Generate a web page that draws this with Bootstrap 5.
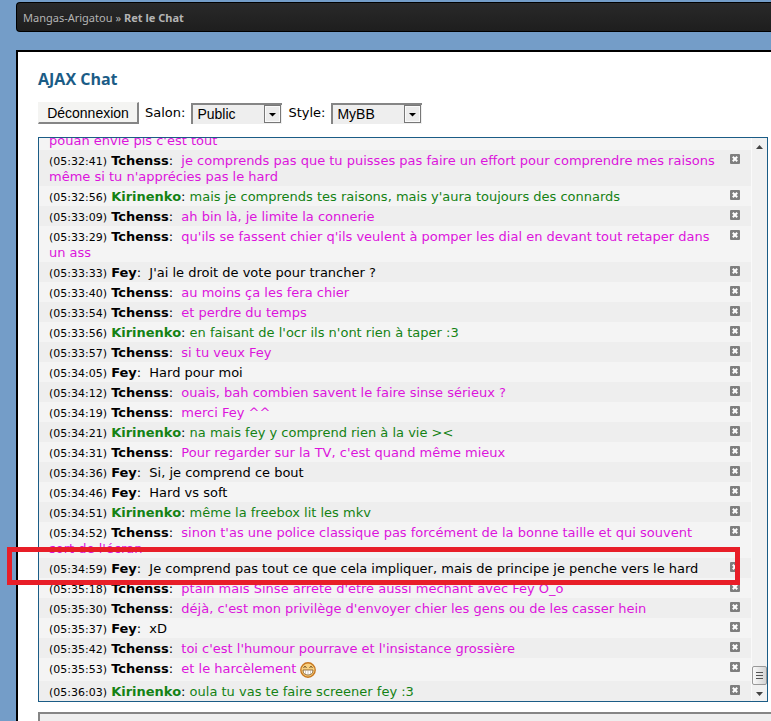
<!DOCTYPE html>
<html lang="fr">
<head>
<meta charset="utf-8">
<meta name="viewport" content="width=device-width, initial-scale=1">
<title>Ret le Chat</title>
<link href="https://cdn.jsdelivr.net/npm/bootstrap@5.3.0/dist/css/bootstrap.min.css" rel="stylesheet">
<style>
body { background: #749dc8; color: #000; font: 13px/16px "DejaVu Sans", Verdana, sans-serif; }
.page { padding: 2px 0 0 16px; }
.crumbs { background: linear-gradient(#292929, #1e1e1e); border: 1px solid #000; border-right: 0; border-radius: 4px 0 0 4px; height: 30px; margin-bottom: 18px; gap: 3px; color: #b4b4b4; font: 11px/16px "Noto Sans", sans-serif; padding: 2px 6px 0; }
.crumbs a { color: inherit; }
.panel { border: 2px solid #000; border-right: 0; border-bottom: 0; padding: 15px 3px 0 20px; }
.panel-title { color: #1b5c86; font: bold 16px/24px "Open Sans", "Trebuchet MS", sans-serif; margin: 0 0 11px; }
.toolbar { gap: 6px; height: 22px; margin-bottom: 13px; }
.logout { background: #f4f4f2; border: 1px solid #f4f4f2; border-right: 2px solid #858585; border-bottom: 2px solid #858585; width: 101px; height: 22px; padding: 0; font: 14px/16px "Liberation Sans", Arial, sans-serif; color: #000; }
.picker { appearance: none; border: 0; border-top: 2px solid #858585; border-left: 2px solid #858585; border-radius: 0; width: 91px; height: 21px; padding: 0 20px 1px 4px; font: 14px/16px "Liberation Sans", Arial, sans-serif; color: #000;
  background: #eee url("data:image/svg+xml,%3Csvg xmlns='http://www.w3.org/2000/svg' width='17' height='18'%3E%3Crect x='.5' y='.5' width='16' height='17' fill='%23ececec' stroke='%23777'/%3E%3Crect x='1.5' y='1.5' width='14' height='15' fill='none' stroke='%23fafafa'/%3E%3Cpath d='M5 8h7L8.500 11.500z'/%3E%3C/svg%3E") no-repeat right 1px top 0; }
.chat-box { border: 1px solid #1b5c86; height: calc(100vh - 156px); min-height: 200px; background: #f4f4f4; }
.messages { overflow: hidden; }
.msg { padding: 3px 11px 1px 10px; background: #f4f4f4; flex: none; }
.msg:nth-child(even) { background: #eee; }
.msg p { margin: 0; padding-right: 12px; }
.msg time { font-size: 11px; line-height: 1; }
.said { margin-left: 4px; }
.said.green { margin-left: 0; }
.pink { color: #dc14dc; }
.green { color: #148214; }
.remove { border: 0; padding: 0; background: none; width: 10px; height: 10px; margin-top: 1px; line-height: 0; flex: none; }
.smiley { height: 19px; padding: 1px 0 2px; vertical-align: -7px; }
.scroll-track { width: 16px; background: #f1f1f1; border-left: 1px solid #fafafa; padding: 7px 0 5px; }
.thumb { width: 15px; height: 19px; border: 1px solid #999; border-radius: 2px; background: linear-gradient(90deg, #fafafa, #d4d4d4); margin-bottom: 7px; }
.highlight { left: -31px; right: 28px; bottom: 117px; height: 38px; border: 5px solid #e81e28; pointer-events: none; }
.entry { border: 0 solid #858585; border-width: 2px 0 0 2px; border-radius: 0; background: #eee; height: 60px; margin: 10px -3px 0 0; resize: none; width: calc(100% + 3px); }
</style>
</head>
<body class="vh-100 overflow-hidden">
<svg class="d-none" aria-hidden="true">
  <symbol id="x" viewBox="0 0 10 10"><rect width="10" height="10" rx="1" fill="#7e7e7e"/><path d="M3.500 3.500l3 3M6.500 3.500l-3 3" stroke="#fff" stroke-width="2" stroke-linecap="square"/></symbol>
</svg>
<div class="page d-flex flex-column">
  <nav class="crumbs d-flex align-items-center" aria-label="Fil d'Ariane">
    <a href="#" class="text-decoration-none">Mangas-Arigatou</a><span>»</span><b>Ret le Chat</b>
  </nav>
  <main class="panel bg-white">
    <h1 class="panel-title">AJAX Chat</h1>
    <div class="toolbar d-flex align-items-center">
      <button class="logout" type="button">Déconnexion</button>
      <label for="salon">Salon:</label>
      <select id="salon" class="picker"><option>Public</option></select>
      <label for="style">Style:</label>
      <select id="style" class="picker"><option>MyBB</option></select>
    </div>
    <div class="position-relative">
      <div class="chat-box d-flex">
        <div class="messages d-flex flex-column justify-content-end flex-grow-1">
          <div class="msg d-flex justify-content-between"><p class="pink">pouah envie pis c'est tout</p></div>
          <div class="msg d-flex justify-content-between"><p><time>(05:32:41)</time> <b>Tchenss</b>: <span class="said pink">je comprends pas que tu puisses pas faire un effort pour comprendre mes raisons même si tu n'apprécies pas le hard</span></p><button class="remove" aria-label="Supprimer"><svg width="10" height="10"><use href="#x"/></svg></button></div>
          <div class="msg d-flex justify-content-between"><p><time>(05:32:56)</time> <b class="green">Kirinenko</b>: <span class="said green">mais je comprends tes raisons, mais y'aura toujours des connards</span></p><button class="remove" aria-label="Supprimer"><svg width="10" height="10"><use href="#x"/></svg></button></div>
          <div class="msg d-flex justify-content-between"><p><time>(05:33:09)</time> <b>Tchenss</b>: <span class="said pink">ah bin là, je limite la connerie</span></p><button class="remove" aria-label="Supprimer"><svg width="10" height="10"><use href="#x"/></svg></button></div>
          <div class="msg d-flex justify-content-between"><p><time>(05:33:29)</time> <b>Tchenss</b>: <span class="said pink">qu'ils se fassent chier q'ils veulent à pomper les dial en devant tout retaper dans un ass</span></p><button class="remove" aria-label="Supprimer"><svg width="10" height="10"><use href="#x"/></svg></button></div>
          <div class="msg d-flex justify-content-between"><p><time>(05:33:33)</time> <b>Fey</b>: <span class="said">J'ai le droit de vote pour trancher ?</span></p><button class="remove" aria-label="Supprimer"><svg width="10" height="10"><use href="#x"/></svg></button></div>
          <div class="msg d-flex justify-content-between"><p><time>(05:33:40)</time> <b>Tchenss</b>: <span class="said pink">au moins ça les fera chier</span></p><button class="remove" aria-label="Supprimer"><svg width="10" height="10"><use href="#x"/></svg></button></div>
          <div class="msg d-flex justify-content-between"><p><time>(05:33:54)</time> <b>Tchenss</b>: <span class="said pink">et perdre du temps</span></p><button class="remove" aria-label="Supprimer"><svg width="10" height="10"><use href="#x"/></svg></button></div>
          <div class="msg d-flex justify-content-between"><p><time>(05:33:56)</time> <b class="green">Kirinenko</b>: <span class="said green">en faisant de l'ocr ils n'ont rien à taper :3</span></p><button class="remove" aria-label="Supprimer"><svg width="10" height="10"><use href="#x"/></svg></button></div>
          <div class="msg d-flex justify-content-between"><p><time>(05:33:57)</time> <b>Tchenss</b>: <span class="said pink">si tu veux Fey</span></p><button class="remove" aria-label="Supprimer"><svg width="10" height="10"><use href="#x"/></svg></button></div>
          <div class="msg d-flex justify-content-between"><p><time>(05:34:05)</time> <b>Fey</b>: <span class="said">Hard pour moi</span></p><button class="remove" aria-label="Supprimer"><svg width="10" height="10"><use href="#x"/></svg></button></div>
          <div class="msg d-flex justify-content-between"><p><time>(05:34:12)</time> <b>Tchenss</b>: <span class="said pink">ouais, bah combien savent le faire sinse sérieux ?</span></p><button class="remove" aria-label="Supprimer"><svg width="10" height="10"><use href="#x"/></svg></button></div>
          <div class="msg d-flex justify-content-between"><p><time>(05:34:19)</time> <b>Tchenss</b>: <span class="said pink">merci Fey ^^</span></p><button class="remove" aria-label="Supprimer"><svg width="10" height="10"><use href="#x"/></svg></button></div>
          <div class="msg d-flex justify-content-between"><p><time>(05:34:21)</time> <b class="green">Kirinenko</b>: <span class="said green">na mais fey y comprend rien à la vie &gt;&lt;</span></p><button class="remove" aria-label="Supprimer"><svg width="10" height="10"><use href="#x"/></svg></button></div>
          <div class="msg d-flex justify-content-between"><p><time>(05:34:31)</time> <b>Tchenss</b>: <span class="said pink">Pour regarder sur la TV, c'est quand même mieux</span></p><button class="remove" aria-label="Supprimer"><svg width="10" height="10"><use href="#x"/></svg></button></div>
          <div class="msg d-flex justify-content-between"><p><time>(05:34:36)</time> <b>Fey</b>: <span class="said">Si, je comprend ce bout</span></p><button class="remove" aria-label="Supprimer"><svg width="10" height="10"><use href="#x"/></svg></button></div>
          <div class="msg d-flex justify-content-between"><p><time>(05:34:46)</time> <b>Fey</b>: <span class="said">Hard vs soft</span></p><button class="remove" aria-label="Supprimer"><svg width="10" height="10"><use href="#x"/></svg></button></div>
          <div class="msg d-flex justify-content-between"><p><time>(05:34:51)</time> <b class="green">Kirinenko</b>: <span class="said green">même la freebox lit les mkv</span></p><button class="remove" aria-label="Supprimer"><svg width="10" height="10"><use href="#x"/></svg></button></div>
          <div class="msg d-flex justify-content-between"><p><time>(05:34:52)</time> <b>Tchenss</b>: <span class="said pink">sinon t'as une police classique pas forcément de la bonne taille et qui souvent sort de l'écran</span></p><button class="remove" aria-label="Supprimer"><svg width="10" height="10"><use href="#x"/></svg></button></div>
          <div class="msg d-flex justify-content-between"><p><time>(05:34:59)</time> <b>Fey</b>: <span class="said">Je comprend pas tout ce que cela impliquer, mais de principe je penche vers le hard</span></p><button class="remove" aria-label="Supprimer"><svg width="10" height="10"><use href="#x"/></svg></button></div>
          <div class="msg d-flex justify-content-between"><p><time>(05:35:18)</time> <b>Tchenss</b>: <span class="said pink">ptain mais Sinse arrête d'être aussi méchant avec Fey O_o</span></p><button class="remove" aria-label="Supprimer"><svg width="10" height="10"><use href="#x"/></svg></button></div>
          <div class="msg d-flex justify-content-between"><p><time>(05:35:30)</time> <b>Tchenss</b>: <span class="said pink">déjà, c'est mon privilège d'envoyer chier les gens ou de les casser hein</span></p><button class="remove" aria-label="Supprimer"><svg width="10" height="10"><use href="#x"/></svg></button></div>
          <div class="msg d-flex justify-content-between"><p><time>(05:35:37)</time> <b>Fey</b>: <span class="said">xD</span></p><button class="remove" aria-label="Supprimer"><svg width="10" height="10"><use href="#x"/></svg></button></div>
          <div class="msg d-flex justify-content-between"><p><time>(05:35:42)</time> <b>Tchenss</b>: <span class="said pink">toi c'est l'humour pourrave et l'insistance grossière</span></p><button class="remove" aria-label="Supprimer"><svg width="10" height="10"><use href="#x"/></svg></button></div>
          <div class="msg d-flex justify-content-between"><p><time>(05:35:53)</time> <b>Tchenss</b>: <span class="said pink">et le harcèlement</span> <svg class="smiley" width="16" viewBox="0 0 16 16" role="img" aria-label="sourire"><circle cx="8" cy="8" r="7.200" fill="#f8d080" stroke="#c87820" stroke-width="1.400"/><path d="M3.500 5.500q1.500-2 3 0M9.500 5.500q1.500-2 3 0" fill="none" stroke="#5a3a10"/><path d="M3 8h10q0 5-5 5T3 8z" fill="#fff" stroke="#7a5220" stroke-width=".8"/><path d="M5.500 8v4M8 8v5M10.500 8v4" stroke="#b8a890" stroke-width=".6"/></svg></p><button class="remove" aria-label="Supprimer"><svg width="10" height="10"><use href="#x"/></svg></button></div>
          <div class="msg d-flex justify-content-between"><p><time>(05:36:03)</time> <b class="green">Kirinenko</b>: <span class="said green">oula tu vas te faire screener fey :3</span></p><button class="remove" aria-label="Supprimer"><svg width="10" height="10"><use href="#x"/></svg></button></div>
        </div>
        <div class="scroll-track d-flex flex-column align-items-center flex-shrink-0" aria-hidden="true">
          <svg width="7" height="4"><path d="M0 4h7L3.500 0z" fill="#444"/></svg>
          <div class="thumb mt-auto d-flex align-items-center justify-content-center"><svg width="7" height="9"><path d="M0 1.500h7M0 4.500h7M0 7.500h7" stroke="#555"/></svg></div>
          <svg width="7" height="4"><path d="M0 0h7L3.500 4z" fill="#444"/></svg>
        </div>
      </div>
      <div class="highlight position-absolute"></div>
    </div>
    <textarea class="entry d-block" aria-label="Message"></textarea>
  </main>
</div>
<script src="https://cdn.jsdelivr.net/npm/bootstrap@5.3.0/dist/js/bootstrap.bundle.min.js"></script>
</body>
</html>
